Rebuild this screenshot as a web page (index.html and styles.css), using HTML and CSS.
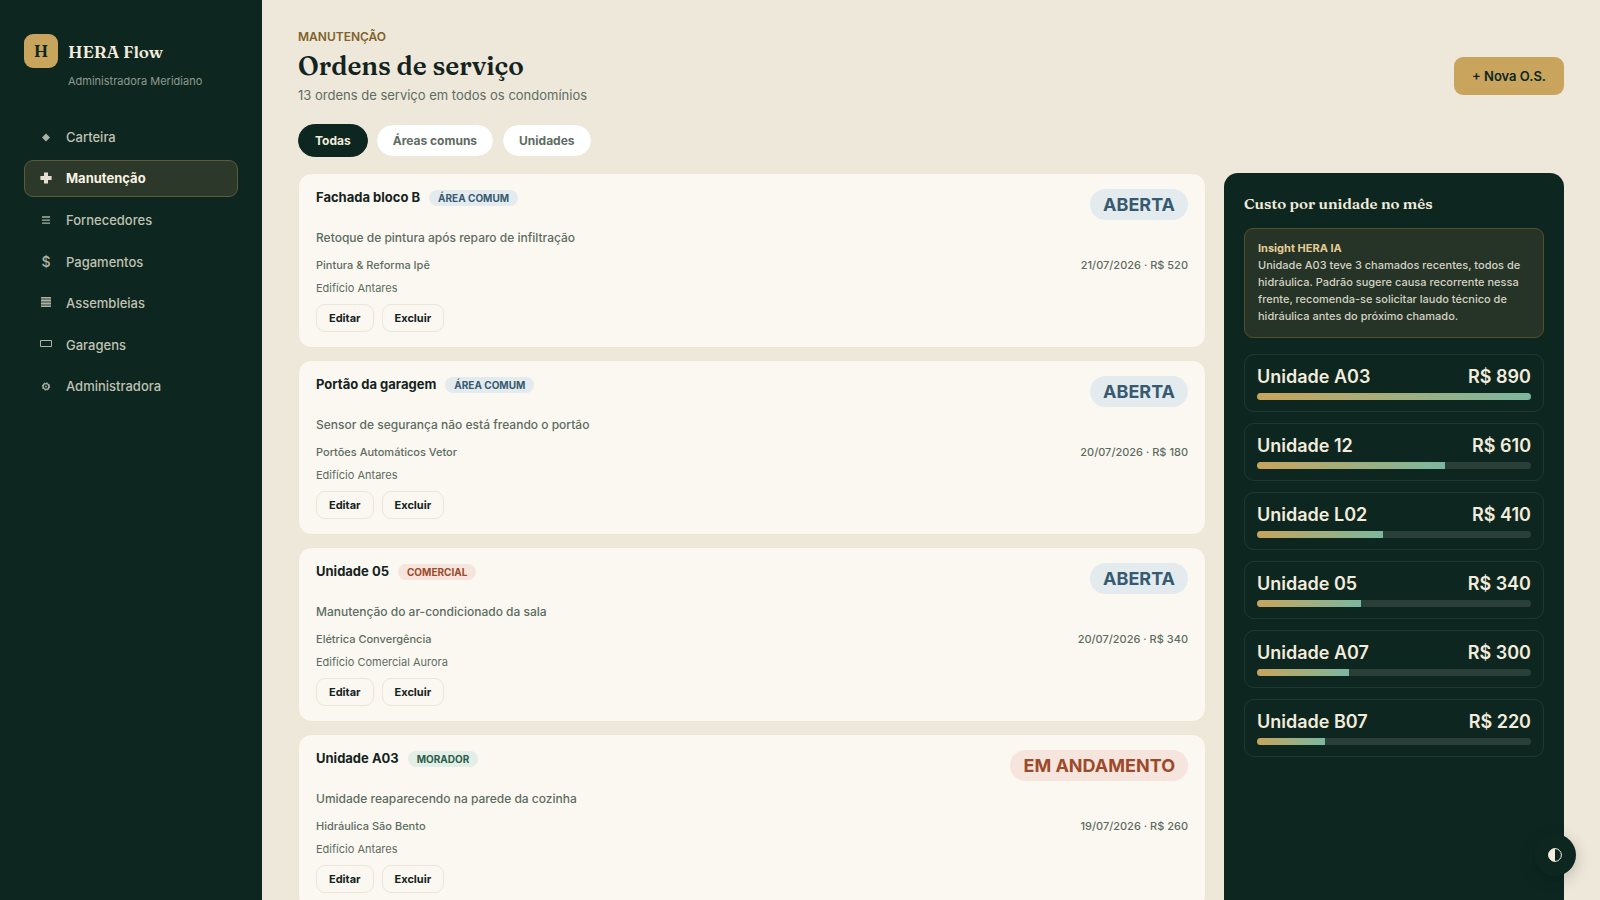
FILE: index.html
```
<!DOCTYPE html>
<html lang="pt-BR">
<head>
  <meta charset="UTF-8" />
  <meta name="viewport" content="width=device-width, initial-scale=1" />
  <title>HERA Flow - Ordens de serviço</title>
  <link rel="stylesheet" href="styles.css">
</head>
<body>
  <div class="app">

    <aside class="sidebar">
      <div class="brand">
        <div class="brand-mark">H</div>
        <div class="brand-name">HERA Flow</div>
      </div>
      <div class="brand-sub">Administradora Meridiano</div>

      <nav class="nav">
        <a class="nav-item" href="#carteira">
          <svg class="nav-icon" viewBox="0 0 14 14"><path d="M7 3.4 11 7.4 7 11.4 3 7.4z" /></svg>
          Carteira
        </a>
        <a class="nav-item active" href="#manutencao">
          <svg class="nav-icon" viewBox="0 0 14 14"><path d="M5 1.6h4V5.1h3.6v4H9v3.5H5V9.1H1.4v-4H5z" /></svg>
          Manutenção
        </a>
        <a class="nav-item" href="#fornecedores">
          <svg class="nav-icon" viewBox="0 0 14 14"><path d="M3 3.3h8v1.4H3zM3 6.4h8v1.4H3zM3 9.4h8v1.4H3z" /></svg>
          Fornecedores
        </a>
        <a class="nav-item" href="#pagamentos">
          <span class="nav-icon">$</span>
          Pagamentos
        </a>
        <a class="nav-item" href="#assembleias">
          <svg class="nav-icon" viewBox="0 0 14 14"><path d="M2 1h10v10H2z" opacity=".6" /><path d="M2 1h10v1H2zM2 4h10v1H2zM2 7h10v1H2zM2 10h10v1H2z" /></svg>
          Assembleias
        </a>
        <a class="nav-item" href="#garagens">
          <svg class="nav-icon" viewBox="0 0 14 14"><path d="M1.5 2.5h11v6h-11z" fill="none" stroke="currentColor" /></svg>
          Garagens
        </a>
        <a class="nav-item" href="#administradora">
          <svg class="nav-icon" viewBox="0 0 14 14"><circle cx="7" cy="7.5" r="2.9" fill="none" stroke="currentColor" stroke-width="1.4" /><circle cx="7" cy="7.5" r="3.7" fill="none" stroke="currentColor" stroke-width="1" stroke-dasharray="1.45" /><circle cx="7" cy="7.5" r=".9" /></svg>
          Administradora
        </a>
      </nav>
    </aside>

    <main class="main">
      <header class="page-header">
        <div class="page-title">
          <div class="eyebrow">MANUTENÇÃO</div>
          <h1>Ordens de serviço</h1>
          <p>13 ordens de serviço em todos os condomínios</p>
        </div>
        <button class="btn-primary" type="button">+ Nova O.S.</button>
      </header>

      <div class="filters">
        <button class="chip active" type="button">Todas</button>
        <button class="chip" type="button">Áreas comuns</button>
        <button class="chip" type="button">Unidades</button>
      </div>

      <div class="columns">
        <section class="orders">
          <article class="order">
            <div class="order-head">
              <div class="order-title"><h2>Fachada bloco B</h2><span class="tag blue">ÁREA COMUM</span></div>
              <span class="status blue">ABERTA</span>
            </div>
            <p class="order-desc">Retoque de pintura após reparo de infiltração</p>
            <div class="order-meta"><span>Pintura &amp; Reforma Ipê</span><span>21/07/2026 · R$ 520</span></div>
            <div class="order-place">Edifício Antares</div>
            <div class="order-actions"><button type="button">Editar</button><button type="button">Excluir</button></div>
          </article>

          <article class="order">
            <div class="order-head">
              <div class="order-title"><h2>Portão da garagem</h2><span class="tag blue">ÁREA COMUM</span></div>
              <span class="status blue">ABERTA</span>
            </div>
            <p class="order-desc">Sensor de segurança não está freando o portão</p>
            <div class="order-meta"><span>Portões Automáticos Vetor</span><span>20/07/2026 · R$ 180</span></div>
            <div class="order-place">Edifício Antares</div>
            <div class="order-actions"><button type="button">Editar</button><button type="button">Excluir</button></div>
          </article>

          <article class="order">
            <div class="order-head">
              <div class="order-title"><h2>Unidade 05</h2><span class="tag red">COMERCIAL</span></div>
              <span class="status blue">ABERTA</span>
            </div>
            <p class="order-desc">Manutenção do ar-condicionado da sala</p>
            <div class="order-meta"><span>Elétrica Convergência</span><span>20/07/2026 · R$ 340</span></div>
            <div class="order-place">Edifício Comercial Aurora</div>
            <div class="order-actions"><button type="button">Editar</button><button type="button">Excluir</button></div>
          </article>

          <article class="order">
            <div class="order-head">
              <div class="order-title"><h2>Unidade A03</h2><span class="tag green">MORADOR</span></div>
              <span class="status red">EM ANDAMENTO</span>
            </div>
            <p class="order-desc">Umidade reaparecendo na parede da cozinha</p>
            <div class="order-meta"><span>Hidráulica São Bento</span><span>19/07/2026 · R$ 260</span></div>
            <div class="order-place">Edifício Antares</div>
            <div class="order-actions"><button type="button">Editar</button><button type="button">Excluir</button></div>
          </article>
        </section>

        <aside class="costs">
          <h2>Custo por unidade no mês</h2>
          <div class="insight">
            <strong>Insight HERA IA</strong>
            <p>Unidade A03 teve 3 chamados recentes, todos de hidráulica. Padrão sugere causa recorrente nessa frente, recomenda-se solicitar laudo técnico de hidráulica antes do próximo chamado.</p>
          </div>
          <div class="unit">
            <div class="unit-row"><span>Unidade A03</span><span>R$ 890</span></div>
            <div class="bar"><div class="bar-fill" style="width: 100%"></div></div>
          </div>
          <div class="unit">
            <div class="unit-row"><span>Unidade 12</span><span>R$ 610</span></div>
            <div class="bar"><div class="bar-fill" style="width: 68.5%"></div></div>
          </div>
          <div class="unit">
            <div class="unit-row"><span>Unidade L02</span><span>R$ 410</span></div>
            <div class="bar"><div class="bar-fill" style="width: 46%"></div></div>
          </div>
          <div class="unit">
            <div class="unit-row"><span>Unidade 05</span><span>R$ 340</span></div>
            <div class="bar"><div class="bar-fill" style="width: 38%"></div></div>
          </div>
          <div class="unit">
            <div class="unit-row"><span>Unidade A07</span><span>R$ 300</span></div>
            <div class="bar"><div class="bar-fill" style="width: 33.7%"></div></div>
          </div>
          <div class="unit">
            <div class="unit-row"><span>Unidade B07</span><span>R$ 220</span></div>
            <div class="bar"><div class="bar-fill" style="width: 24.7%"></div></div>
          </div>
        </aside>
      </div>
    </main>
  </div>

  <button class="theme-toggle" type="button" aria-label="Alternar tema">
    <svg viewBox="0 0 14 14"><circle cx="7" cy="7" r="6.4" fill="none" stroke="currentColor" /><path d="M7 .5a6.5 6.5 0 0 0 0 13z" fill="currentColor" /></svg>
  </button>
</body>
</html>
```
FILE: styles.css
```
* {
  box-sizing: border-box;
}

body {
  margin: 0;
  font-family: Inter, "Liberation Sans", sans-serif;
  font-size: 13px;
  color: #14231e;
  background: #efe8db;
  overflow: hidden;
}

h1, h2, p {
  margin: 0;
}

button {
  font-family: inherit;
  cursor: pointer;
}

.app {
  display: grid;
  grid-template-columns: 262px 1fr;
  height: 100vh;
  overflow: hidden;
}

/* sidebar */
.sidebar {
  background: #0d2720;
  color: #f3ecdc;
  padding: 34px 24px;
}

.brand {
  display: flex;
  align-items: center;
  gap: 10px;
}

.brand-mark {
  width: 34px;
  height: 34px;
  border-radius: 9px;
  background: #c8a45c;
  color: #0d2720;
  font-family: Fraunces, "Liberation Serif", serif;
  font-size: 17px;
  font-weight: 600;
  line-height: 34px;
  text-align: center;
}

.brand-name {
  font-family: Fraunces, "Liberation Serif", serif;
  font-size: 17px;
  font-weight: 600;
}

.brand-sub {
  margin: 5px 0 29px 44px;
  font-size: 11px;
  line-height: 16px;
  color: #8e9a8f;
}

.nav {
  display: flex;
  flex-direction: column;
  gap: 4px;
  min-height: 287px;
}

.nav-item {
  flex: 1;
  display: flex;
  align-items: center;
  gap: 13px;
  padding: 0 14px;
  border: 1px solid transparent;
  border-radius: 9px;
  color: #c0c1b3;
  font-weight: 500;
  text-decoration: none;
}

.nav-item.active {
  background: #2c382a;
  border-color: #5f5a35;
  color: #f8f2e2;
  font-weight: 700;
}

.nav-icon {
  width: 14px;
  height: 14px;
  font-size: 14px;
  line-height: 14px;
  text-align: center;
  fill: currentColor;
  opacity: .9;
}

/* content */
.main {
  padding: 28px 36px;
  background: #eee8da;
}

.page-header {
  display: flex;
  justify-content: space-between;
  align-items: center;
}

.page-title {
  padding-bottom: 20px;
}

.eyebrow {
  color: #80622a;
  font-size: 12px;
  font-weight: 600;
  line-height: 18px;
}

h1 {
  font-family: Fraunces, "Liberation Serif", serif;
  font-size: 26px;
  font-weight: 600;
  line-height: 40px;
}

.page-title p {
  color: #5d6c62;
  line-height: 18px;
}

.btn-primary {
  height: 38px;
  padding: 0 18px;
  border: 0;
  border-radius: 9px;
  background: #c8a45c;
  color: #0d2720;
  font-size: 13px;
  font-weight: 600;
}

.filters {
  display: flex;
  gap: 8px;
  margin-bottom: 16px;
}

.chip {
  height: 33px;
  padding: 0 16px;
  border: 1px solid #eee8da;
  border-radius: 17px;
  background: #fff;
  background-clip: padding-box;
  color: #5d6c62;
  font-size: 12px;
  font-weight: 700;
}

.chip.active {
  background: #0d2720;
  border-color: #0d2720;
  color: #f3ecdc;
}

.columns {
  display: grid;
  grid-template-columns: 1fr 340px;
  gap: 18px;
}

/* service orders */
.orders {
  display: flex;
  flex-direction: column;
  gap: 12px;
}

.order {
  padding: 15px 17px;
  border: 1px solid #ece6d4;
  border-radius: 13px;
  background: #fbf8f1;
}

.order-head {
  display: flex;
  justify-content: space-between;
  align-items: flex-start;
}

.order-title {
  display: flex;
  align-items: center;
  gap: 9px;
}

.order-title h2 {
  font-size: 13px;
  font-weight: 700;
  line-height: 17px;
}

.tag {
  padding: 0 9px;
  border-radius: 8px;
  font-size: 10px;
  font-weight: 700;
  line-height: 16px;
}

.status {
  padding: 0 13px;
  border-radius: 16px;
  font-size: 18px;
  font-weight: 700;
  line-height: 31px;
}

.blue {
  background: #e3ebef;
  color: #375a70;
}

.red {
  background: #f6e5dc;
  color: #9c4a2b;
}

.green {
  background: #e3eee7;
  color: #2c5d4a;
}

.order-desc {
  margin-top: 8px;
  color: #5d6c62;
  font-size: 12px;
  font-weight: 500;
  line-height: 20px;
}

.order-meta {
  display: flex;
  justify-content: space-between;
  margin-top: 8px;
  color: #5d6c62;
  font-size: 11px;
  font-weight: 500;
  line-height: 18px;
}

.order-place {
  margin-top: 6px;
  color: #5d6c62;
  font-size: 11px;
  line-height: 16px;
}

.order-actions {
  display: flex;
  gap: 8px;
  margin-top: 8px;
}

.order-actions button {
  height: 28px;
  padding: 0 12px;
  border: 1px solid #ece6d6;
  border-radius: 9px;
  background: transparent;
  color: #14231e;
  font-size: 11px;
  font-weight: 700;
}

/* cost per unit */
.costs {
  padding: 20px;
  border-radius: 14px 14px 0 0;
  background: #0d2720;
  color: #f3ecdc;
}

.costs h2 {
  margin-bottom: 13px;
  font-family: Fraunces, "Liberation Serif", serif;
  font-size: 15px;
  font-weight: 600;
  line-height: 22px;
}

.insight {
  margin-bottom: 16px;
  padding: 11px 13px 12px;
  border: 1px solid #564f2e;
  border-radius: 9px;
  background: #263428;
  color: #d5d2c3;
  font-size: 11px;
  font-weight: 500;
  line-height: 17px;
}

.insight strong {
  color: #e5cd95;
  font-weight: 700;
}

.unit {
  margin-bottom: 11px;
  padding: 11px 12px;
  border: 1px solid #213831;
  border-radius: 10px;
}

.unit-row {
  display: flex;
  justify-content: space-between;
  margin-bottom: 5px;
  font-size: 18px;
  font-weight: 600;
  line-height: 22px;
}

.bar {
  height: 7px;
  border-radius: 4px;
  background: #2a3f38;
  overflow: hidden;
}

.bar-fill {
  height: 100%;
  background: linear-gradient(90deg, #c8a45c, #7db79f);
}

.theme-toggle {
  position: fixed;
  right: 24px;
  bottom: 24px;
  width: 42px;
  height: 42px;
  padding: 14px;
  border: 0;
  border-radius: 50%;
  background: #0d2720;
  color: #f3ecdc;
  box-shadow: 0 4px 16px rgba(0, 0, 0, .2);
}

.theme-toggle svg {
  display: block;
  width: 14px;
  height: 14px;
}
```
